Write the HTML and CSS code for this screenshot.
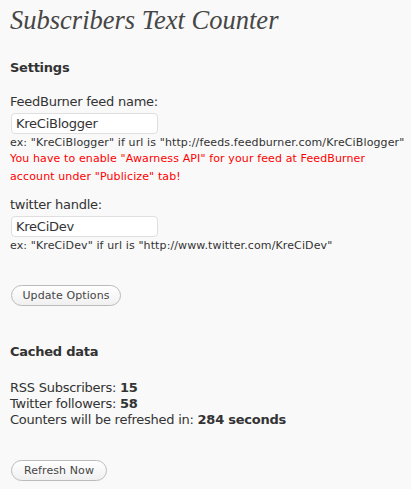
FILE: index.html
```html
<!DOCTYPE html>
<html>
<head>
<meta charset="utf-8">
<link rel="stylesheet" href="styles.css">
</head>
<body>
<div class="wrap">
  <h2 class="title">Subscribers Text Counter</h2>
  <h3 class="section">Settings</h3>
  <div class="field">
    <label class="label">FeedBurner feed name:</label>
    <input class="input" type="text" value="KreCiBlogger">
    <p class="hint">ex: "KreCiBlogger" if url is "http://feeds.feedburner.com/KreCiBlogger"</p>
    <p class="warn">You have to enable "Awarness API" for your feed at FeedBurner account under "Publicize" tab!</p>
  </div>
  <div class="field field2">
    <label class="label">twitter handle:</label>
    <input class="input" type="text" value="KreCiDev">
    <p class="hint">ex: "KreCiDev" if url is "http://www.twitter.com/KreCiDev"</p>
  </div>
  <button class="btn btn-update">Update Options</button>
  <h3 class="section section2">Cached data</h3>
  <div class="stats">
    <div>RSS Subscribers: <b>15</b></div>
    <div>Twitter followers: <b>58</b></div>
    <div>Counters will be refreshed in: <b>284 seconds</b></div>
  </div>
  <button class="btn btn-refresh">Refresh Now</button>
</div>
</body>
</html>
```
FILE: styles.css
```css
html, body {
  margin: 0;
  padding: 0;
  background: #f9f9f9;
}
body {
  font-family: "DejaVu Sans", Verdana, sans-serif;
  color: #333;
  font-size: 13px;
  letter-spacing: -0.25px;
}
.wrap {
  padding: 0 10px;
}
.title {
  margin: 0;
  padding-top: 4px;
  font-family: "Liberation Serif", Georgia, serif;
  font-style: italic;
  font-weight: normal;
  font-size: 26.5px;
  line-height: 32px;
  letter-spacing: 0;
  color: #464646;
}
.section {
  margin: 24px 0 0;
  font-size: 13px;
  font-weight: bold;
  line-height: 16px;
}
.field {
  margin-top: 18px;
}
.field2 {
  margin-top: 11px;
}
.label {
  display: block;
  font-size: 13px;
  line-height: 16px;
}
.input {
  display: block;
  box-sizing: border-box;
  width: 147px;
  height: 21px;
  margin: 3px 0 0 1px;
  padding: 0 4px;
  border: 1px solid #dfdfdf;
  border-radius: 4px;
  background: #fff;
  font-family: "DejaVu Sans", Verdana, sans-serif;
  font-size: 13px;
  letter-spacing: -0.25px;
  color: #333;
}
.hint {
  margin: 1px 0 0;
  font-size: 11px;
  line-height: 16px;
  letter-spacing: 0.12px;
  color: #333;
  white-space: nowrap;
}
.warn {
  margin: -1px 0 0;
  font-size: 11px;
  line-height: 18px;
  letter-spacing: 0.12px;
  color: #f00;
  max-width: 380px;
}
.btn {
  display: block;
  box-sizing: border-box;
  height: 21px;
  margin-left: 1px;
  padding: 0;
  white-space: nowrap;
  text-align: center;
  border: 1px solid #bbb;
  border-radius: 11px;
  background: linear-gradient(#ffffff, #f0f0f0);
  font-family: "DejaVu Sans", Verdana, sans-serif;
  font-size: 11px;
  letter-spacing: 0.1px;
  color: #464646;
}
.btn-update {
  margin-top: 31px;
  width: 110px;
}
.section2 {
  margin-top: 38px;
}
.stats {
  margin-top: 20px;
  font-size: 13px;
  line-height: 16px;
}
.btn-refresh {
  margin-top: 32px;
  width: 96px;
}
```
